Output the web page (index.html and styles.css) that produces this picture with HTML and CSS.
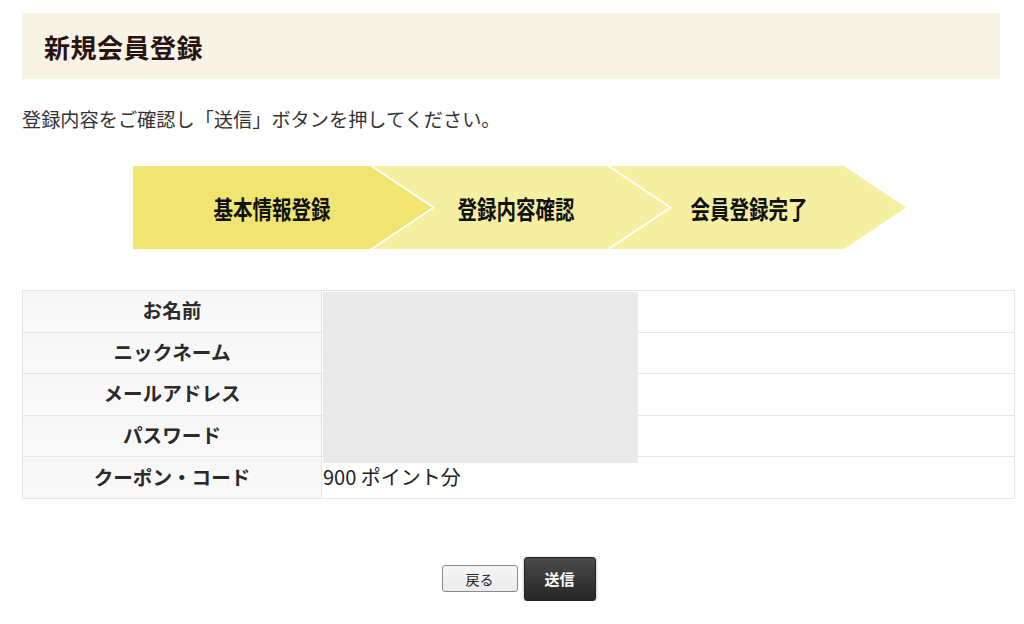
FILE: index.html
```html
<!DOCTYPE html>
<html lang="ja">
<head>
<meta charset="utf-8">
<title>新規会員登録</title>
<link rel="stylesheet" href="styles.css">
</head>
<body>
<div class="page">
  <div class="page-head"><h1 class="page-title">新規会員登録</h1></div>
  <p class="lead">登録内容をご確認し「送信」ボタンを押してください。</p>
  <ol class="steps">
    <li class="step step-first step-current"><span>基本情報登録</span></li>
    <li class="step"><span>登録内容確認</span></li>
    <li class="step step-last"><span>会員登録完了</span></li>
  </ol>
  <div class="confirm">
    <table class="confirm-table">
      <tr><th>お名前</th><td></td></tr>
      <tr><th>ニックネーム</th><td></td></tr>
      <tr><th>メールアドレス</th><td></td></tr>
      <tr><th>パスワード</th><td></td></tr>
      <tr><th>クーポン・コード</th><td>900 ポイント分</td></tr>
    </table>
    <div class="redact"></div>
  </div>
  <div class="actions">
    <button class="btn btn-back" type="button">戻る</button>
    <button class="btn btn-send" type="button">送信</button>
  </div>
</div>
</body>
</html>
```

FILE: styles.css
```css
html, body {
  margin: 0;
  padding: 0;
  background: #fff;
}
body {
  font-family: "Noto Sans CJK JP", "Noto Sans", sans-serif;
  color: #333;
}
.page {
  padding: 13px 9px 0 22px;
}
.page-head {
  width: 978px;
  height: 66px;
  background: #f7f3e5;
  display: flex;
  align-items: center;
  padding-left: 22px;
  box-sizing: border-box;
}
.page-title {
  margin: 0;
  font-size: 26px;
  font-weight: 700;
  color: #2b1313;
  letter-spacing: 0.5px;
}
.lead {
  margin: 28px 0 0;
  font-size: 19.2px;
  line-height: 24px;
  color: #333;
}
.steps {
  list-style: none;
  margin: 35px 0 0 111px;
  padding: 0;
  display: flex;
  height: 83px;
}
.step {
  width: 299px;
  height: 83px;
  flex: none;
  margin-left: -62px;
  background: #f4efa1;
  display: flex;
  align-items: center;
  justify-content: center;
  padding-right: 6px;
  box-sizing: border-box;
  clip-path: polygon(3px 0, 237px 0, 299px 50%, 237px 100%, 3px 100%, 65px 50%);
}
.step-first {
  margin-left: 0;
  clip-path: polygon(0 0, 237px 0, 299px 50%, 237px 100%, 0 100%);
  padding-right: 20px;
}
.step-last {
  padding-right: 14px;
}
.step-current {
  background: #f0e571;
}
.step span {
  display: inline-block;
  font-size: 25px;
  font-weight: 700;
  color: #111;
  transform: scaleX(0.78);
  white-space: nowrap;
}
.confirm {
  position: relative;
  width: 993px;
  margin-top: 41px;
}
.confirm-table {
  width: 100%;
  border-collapse: collapse;
  border: 1px solid #e3e3e3;
}
.confirm-table th,
.confirm-table td {
  border: 1px solid #e6e6e6;
  height: 38.6px;
  padding: 0 0 2px;
  line-height: 24px;
  font-size: 19.6px;
}
.confirm-table th {
  width: 298px;
  background: linear-gradient(#f6f6f6, #fafafa);
  font-weight: 700;
  color: #2a2a2a;
  text-align: center;
}
.confirm-table td {
  padding-left: 1px;
  font-size: 20px;
  color: #222;
  text-align: left;
}
.redact {
  position: absolute;
  left: 301px;
  top: 2px;
  width: 315px;
  height: 171px;
  background: #e9e9e9;
}
.actions {
  width: 993px;
  margin-top: 58px;
  display: flex;
  justify-content: center;
  align-items: center;
  gap: 6px;
}
.btn {
  font-family: "Noto Sans CJK JP", sans-serif;
  border-radius: 3px;
  cursor: pointer;
  padding: 0;
}
.btn-back {
  width: 76px;
  height: 27px;
  background: linear-gradient(#f4f4f4, #ececec);
  border: 1px solid #8a8a8a;
  color: #222;
  font-size: 14px;
}
.btn-send {
  width: 72px;
  height: 44px;
  background: linear-gradient(#4a4a4a, #262626);
  border: 1px solid #222;
  color: #fff;
  font-size: 15px;
  font-weight: 700;
  box-shadow: 0 1px 3px rgba(0,0,0,0.35);
}
```
